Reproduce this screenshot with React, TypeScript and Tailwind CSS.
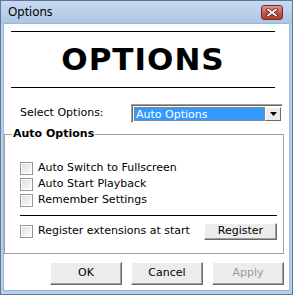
import React from "react";

const Check = () => (
  <span className="w-[13px] h-[13px] shrink-0 border border-[#979797] bg-white p-[1px] box-border">
    <span className="block w-full h-full bg-gradient-to-br from-[#e0e0e0] to-[#fafafa]" />
  </span>
);

const Btn = ({ children, disabled = false, w = "w-[72px]", h = "h-[23px]" }: { children: React.ReactNode; disabled?: boolean; w?: string; h?: string }) => (
  <div
    className={`${w} ${h} flex items-center justify-center bg-[#ececec] border-t border-l border-t-white border-l-white border-b border-r border-b-[#696969] border-r-[#696969] shadow-[inset_-1px_-1px_0_#a0a0a0] text-[11px] ${disabled ? "text-[#9a9a9a]" : "text-black"}`}
  >
    {children}
  </div>
);

export default function App() {
  return (
    <div
      className="w-[293px] h-[295px] flex flex-col bg-[#b7cfea] border border-[#5d7898] box-border"
      style={{ fontFamily: '"DejaVu Sans", Verdana, sans-serif' }}
    >
      {/* Title bar */}
      <div className="h-[22px] shrink-0 flex items-center justify-between pl-[7px] pr-[9px] bg-gradient-to-b from-[#c7daef] to-[#adc6e4]">
        <span className="text-[12px] text-black" style={{ fontFamily: '"Noto Sans", "Open Sans", sans-serif' }}>
          Options
        </span>
        <div className="w-[22px] h-[15px] rounded-[3px] border border-[#6b2f2a] bg-gradient-to-b from-[#e09a90] via-[#c8574c] to-[#b9392d] flex items-center justify-center">
          <svg width="12" height="9" viewBox="0 0 12 9">
            <path d="M2 1.5 L10 7.5 M10 1.5 L2 7.5" stroke="#4a1a16" strokeWidth="3.4" strokeLinecap="square" />
            <path d="M2 1.5 L10 7.5 M10 1.5 L2 7.5" stroke="#ffffff" strokeWidth="1.8" strokeLinecap="square" />
          </svg>
        </div>
      </div>

      {/* Client area */}
      <div className="flex-1 mx-[2px] mb-[3px] bg-white flex flex-col border border-[#9fb6cf] text-[11px] text-black">
        <div className="mt-[7px] ml-[7px] w-[264px] h-px bg-black" />
        <div className="ml-[7px] w-[264px] h-[55px] flex items-center justify-center">
          <span className="text-[31px] font-bold tracking-[1px] leading-none">OPTIONS</span>
        </div>
        <div className="ml-[7px] w-[264px] h-px bg-black" />

        {/* Select row */}
        <div className="mt-[16px] h-[19px] flex items-center">
          <span className="ml-[16px] w-[111px]">Select Options:</span>
          <div className="w-[152px] h-[19px] border border-t-[#a0a0a0] border-l-[#a0a0a0] border-b-white border-r-white bg-white flex">
            <div className="flex-1 flex border-t border-l border-t-[#696969] border-l-[#696969] p-[1px]">
              <div className="flex-1 bg-[#3399ff] border border-dotted border-[#c08030] text-white flex items-center pl-[1px] leading-none">
                Auto Options
              </div>
              <div className="w-[16px] bg-[#ececec] border-t border-l border-t-white border-l-white border-b border-r border-b-[#696969] border-r-[#696969] flex items-center justify-center">
                <svg width="7" height="4" viewBox="0 0 7 4">
                  <path d="M0 0 H7 L3.5 4 Z" fill="#000" />
                </svg>
              </div>
            </div>
          </div>
        </div>

        {/* Group box */}
        <fieldset className="mt-[4px] ml-0 w-[280px] h-[127px] border border-[#a0a0a0] px-0 flex flex-col">
          <legend className="ml-[7px] px-[1px] font-bold text-[11px] leading-[14px]">Auto Options</legend>
          <div className="mt-[19px] flex flex-col">
            {["Auto Switch to Fullscreen", "Auto Start Playback", "Remember Settings"].map((t) => (
              <div key={t} className="h-[16px] flex items-center pl-[15px] gap-[5px]">
                <Check />
                <span>{t}</span>
              </div>
            ))}
          </div>
          <div className="mt-[7px] ml-[15px] w-[257px] h-px bg-black" />
          <div className="mt-[7px] h-[17px] flex items-center pl-[15px]">
            <Check />
            <span className="ml-[5px] w-[166px]">Register extensions at start</span>
            <Btn w="w-[73px]" h="h-[17px]">Register</Btn>
          </div>
        </fieldset>

        {/* Bottom buttons */}
        <div className="mt-[8px] flex justify-end gap-[9px] pr-[5px]">
          <Btn>OK</Btn>
          <Btn>Cancel</Btn>
          <Btn disabled>Apply</Btn>
        </div>
      </div>
    </div>
  );
}
